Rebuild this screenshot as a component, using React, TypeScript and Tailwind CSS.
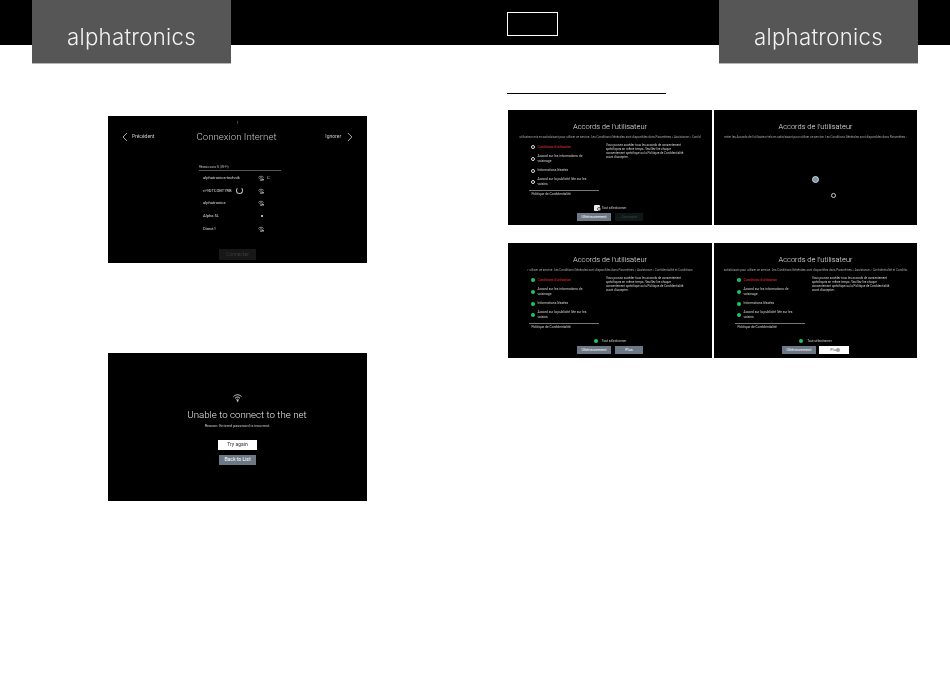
import React from "react";

const font = { fontFamily: 'Roboto,"Liberation Sans",sans-serif' };

function Logo() {
  return (
    <div className="w-[199px] h-[64px] bg-[#565656] border-b border-[#b5b5b5] flex justify-center items-start pt-[22px] shrink-0">
      <span className="text-[22.2px] leading-[30px] font-light text-[#f2f2f2] tracking-[0.3px] grayscale" style={{ fontFamily: "Inter, sans-serif" }}>
        alphatronics
      </span>
    </div>
  );
}

function Wifi({ size = 7, color = "#cfcfcf", lock }: { size?: number; color?: string; lock?: boolean }) {
  return (
    <svg width={size} height={size} viewBox="0 0 24 24" fill="none" stroke={color} strokeWidth="2.4" strokeLinecap="round">
      <path d="M2 9c6-6 14-6 20 0" />
      <path d="M6 13.5c4-4 8-4 12 0" />
      <path d="M9.5 17.5c2-2 3-2 5 0" />
      <circle cx="12" cy="21" r="1" fill={color} />
      {lock && <path d="M17 16h6v6h-6z" fill={color} stroke="none" />}
    </svg>
  );
}

function NetRow({ name, spinner, extra, faint }: { name: string; spinner?: boolean; extra?: boolean; faint?: boolean }) {
  return (
    <div className="h-[12.6px] flex items-center pl-[4px] text-[4.1px] text-[#d8d8d8]">
      <span className="w-[55px] shrink-0 whitespace-nowrap flex items-center gap-[2px]">
        {name}
        {spinner && <span className="w-[7px] h-[7px] rounded-full border-[0.6px] border-[#bdbdbd] border-t-transparent ml-[2px]" />}
      </span>
      {faint ? <span className="w-[2px] h-[2px] bg-[#aaa] ml-[3px]" /> : <Wifi size={6} lock />}
      {extra && <span className="ml-[3px] text-[4px]">C</span>}
    </div>
  );
}

function ConnectScreen() {
  return (
    <div className="w-[259px] h-[147px] bg-black text-white relative flex flex-col shrink-0 grayscale" style={font}>
      <div className="h-[9px] flex justify-center items-end text-[3px] text-[#bbb] leading-none">1</div>
      <div className="flex items-center h-[24px] px-[14px]">
        <svg width="6" height="10" viewBox="0 0 6 10" fill="none" stroke="#ddd" strokeWidth="0.8"><path d="M5 1 1 5l4 4" /></svg>
        <span className="ml-[4px] w-[66px] text-[5px] text-[#c8c8c8]">Précédent</span>
        <span className="flex-1 text-center text-[9.7px] font-light text-[#c4c4c4] leading-none whitespace-nowrap">Connexion Internet</span>
        <span className="w-[66px] text-right text-[5px] text-[#c8c8c8]">Ignorer</span>
        <svg className="ml-[6px]" width="6" height="10" viewBox="0 0 6 10" fill="none" stroke="#ddd" strokeWidth="0.8"><path d="m1 1 4 4-4 4" /></svg>
      </div>
      <div className="ml-[91px] w-[82px] mt-[16px]">
        <div className="text-[3px] text-[#bbb] leading-[4px] pb-[1px] border-b-[0.5px] border-[#555]">Réseau sans fil (Wi-Fi)</div>
        <div className="mt-[1px]">
          <NetRow name="alphatronics-technik" extra />
          <NetRow name="ri-9DTCOBT7RB" spinner />
          <NetRow name="alphatronics" />
          <NetRow name="Alpha 5L" faint />
          <NetRow name="Direct1" />
        </div>
      </div>
      <div className="mt-auto mb-[3px] self-center w-[37px] h-[11px] bg-[#161816] text-[5px] text-[#3a3c3a] flex items-center justify-center">Connecter</div>
    </div>
  );
}

function FailScreen() {
  return (
    <div className="w-[259px] h-[148px] bg-black text-white flex flex-col items-center pt-[40px] mt-[90px] shrink-0" style={font}>
      <Wifi size={9} color="#e8e8e8" />
      <div className="mt-[6px] ml-[19px] text-[9.7px] font-light leading-[13px] text-[#e8e8e8] whitespace-nowrap grayscale">Unable to connect to the net</div>
      <div className="mt-[2px] text-[3.8px] leading-[5px] text-[#c4c4c4] grayscale">Reason: Entered password is incorrect.</div>
      <div className="mt-[12px] w-[39px] h-[10px] bg-white text-[#333] text-[5px] flex items-center justify-center grayscale">Try again</div>
      <div className="mt-[5px] w-[37px] h-[10px] bg-[#6c7885] text-white text-[5px] flex items-center justify-center">Back to List</div>
    </div>
  );
}

function Dot({ on }: { on: boolean }) {
  return on ? (
    <span className="w-[4px] h-[4px] rounded-full bg-[#1fc36c] shrink-0" />
  ) : (
    <span className="w-[4px] h-[4px] rounded-full border-[0.5px] border-[#ddd] shrink-0" />
  );
}

function Item({ on, red, lines }: { on: boolean; red?: boolean; lines: string[] }) {
  return (
    <div className="flex items-center gap-[3px]">
      <Dot on={on} />
      <div className={`text-[3.3px] leading-[5.4px] ${red ? "text-[#e0323c]" : "text-[#d5d5d5] grayscale"}`}>
        {lines.map((l) => (
          <div key={l} className="whitespace-nowrap">{l}</div>
        ))}
      </div>
    </div>
  );
}

function Title() {
  return <div className="text-[7.5px] font-light leading-[10px] text-[#e8e8e8] whitespace-nowrap grayscale">Accords de l'utilisateur</div>;
}

function Agreement({
  subtitle,
  on,
  second,
  secondWhite,
  selectOverlay,
}: {
  subtitle: string;
  on: boolean;
  second: string;
  secondWhite?: boolean;
  selectOverlay?: boolean;
}) {
  return (
    <div className="h-[115px] bg-black text-white flex flex-col items-center pt-[12px] relative overflow-hidden" style={font}>
      <Title />
      <div className="w-full mt-[3px] h-[5px] text-[3px] leading-[5px] text-[#a5a5a5] whitespace-nowrap flex justify-center grayscale">{subtitle}</div>
      <div className="w-full flex mt-[4.6px] pl-[22.5px]">
        <div className="w-[75.5px] flex flex-col gap-[3.5px]">
          <Item on={on} red lines={["Conditions d'utilisation"]} />
          <Item on={on} lines={["Accord sur les informations de", "voisinage"]} />
          <Item on={on} lines={["Informations léssées"]} />
          <Item on={on} lines={["Accord sur la publicité liée sur les", "voisins"]} />
          <div className="-ml-[2px] -mt-[1.5px] w-[70px] border-t-[0.5px] border-[#777] pt-[1.5px] pl-[3px] text-[3.3px] leading-[5px] text-[#d5d5d5] grayscale">Politique de Confidentialité</div>
        </div>
        <div className="text-[3px] leading-[3.9px] text-[#cfcfcf] whitespace-nowrap -mt-[0.5px] grayscale">
          <div>Vous pouvez accéder tous les accords de consentement</div>
          <div>spécifiques en même temps. Veuillez lire chaque</div>
          <div>consentement spécifique ou la Politique de Confidentialité</div>
          <div>avant d'accepter.</div>
        </div>
      </div>
      <div className="absolute left-0 right-0 bottom-[14px] flex justify-center items-center gap-[2px] text-[3.2px] leading-[6px] text-[#cfcfcf]">
        {selectOverlay ? <span className="w-[6px] h-[6px] bg-[#e8eef0] rounded-[1px]" /> : <Dot on />}
        <span className={selectOverlay ? "grayscale" : "ml-[2px] grayscale"}>Tout sélectionner</span>
      </div>
      <div className={`absolute left-0 right-0 bottom-[4px] flex justify-center ${secondWhite ? "gap-[3px]" : "gap-[4px]"}`}>
        <div className="w-[34px] h-[8px] bg-[#6c7885] text-[3.8px] text-white flex items-center justify-center">Ultérieurement</div>
        <div className={`${secondWhite ? "w-[30px]" : "w-[28px]"} h-[8px] text-[3.8px] flex items-center justify-center ${secondWhite ? "bg-white text-[#555]" : second === "J'accepte" ? "bg-[#0e1917] text-[#39453f]" : "bg-[#6c7885] text-white"}`}>
          {second}
        </div>
      </div>
      {secondWhite && <span className="absolute left-[122px] top-[105px] w-[4px] h-[4px] rounded-full bg-[#a5a5a5]" />}
      {selectOverlay && <span className="absolute left-[89px] top-[97px] w-[4px] h-[4px] rounded-full border-[0.6px] border-[#555] bg-[#e8eef0]" />}
    </div>
  );
}

function LoadingScreen() {
  return (
    <div className="h-[115px] bg-black text-white flex flex-col items-center pt-[12px] relative overflow-hidden" style={font}>
      <Title />
      <div className="w-full mt-[3px] h-[5px] text-[3px] leading-[5px] text-[#a5a5a5] whitespace-nowrap flex justify-center grayscale">enter les Accords de l'utilisateur tels en satisfaisant pour utiliser ce service. Les Conditions Générales sont disponibles dans Paramètres :</div>
      <div className="w-[7px] h-[7px] rounded-full bg-[#7f93a3] border-[0.5px] border-[#cfd8dd] mt-[36px]" />
      <div className="w-[5px] h-[5px] rounded-full border-[0.6px] border-[#ccc] mt-[10px] ml-[36px]" />
    </div>
  );
}

export default function App() {
  return (
    <div className="w-[950px] h-[674px] bg-white overflow-hidden relative">
      <div className="h-[45px] bg-black flex items-start pl-[32px]">
        <Logo />
        <div className="w-[276px] shrink-0" />
        <div className="w-[51px] h-[24px] mt-[12px] border border-white shrink-0" />
        <div className="w-[161px] shrink-0" />
        <Logo />
      </div>
      <div className="flex mt-[48px]">
        <div className="w-[507px] shrink-0 flex flex-col pl-[108px] pt-[23px]">
          <ConnectScreen />
          <FailScreen />
        </div>
        <div className="flex-1">
          <div className="w-[159px] h-px bg-black" />
          <div className="mt-[16px] ml-px grid grid-cols-[204px_203px] gap-x-[2px] gap-y-[18px] w-[409px]">
            <Agreement
              subtitle="utilisateur mis en satisfaisant pour utiliser ce service. Les Conditions Générales sont disponibles dans Paramètres > Assistance > Confid"
              on={false}
              second="J'accepte"
              selectOverlay
            />
            <LoadingScreen />
            <Agreement
              subtitle="r utiliser ce service. Les Conditions Générales sont disponibles dans Paramètres > Assistance > Confidentialité et Conditions"
              on
              second="Plus"
            />
            <Agreement
              subtitle="satisfaisant pour utiliser ce service. Les Conditions Générales sont disponibles dans Paramètres > Assistance > Confidentialité et Conditio"
              on
              second="Plus"
              secondWhite
            />
          </div>
        </div>
      </div>
    </div>
  );
}
